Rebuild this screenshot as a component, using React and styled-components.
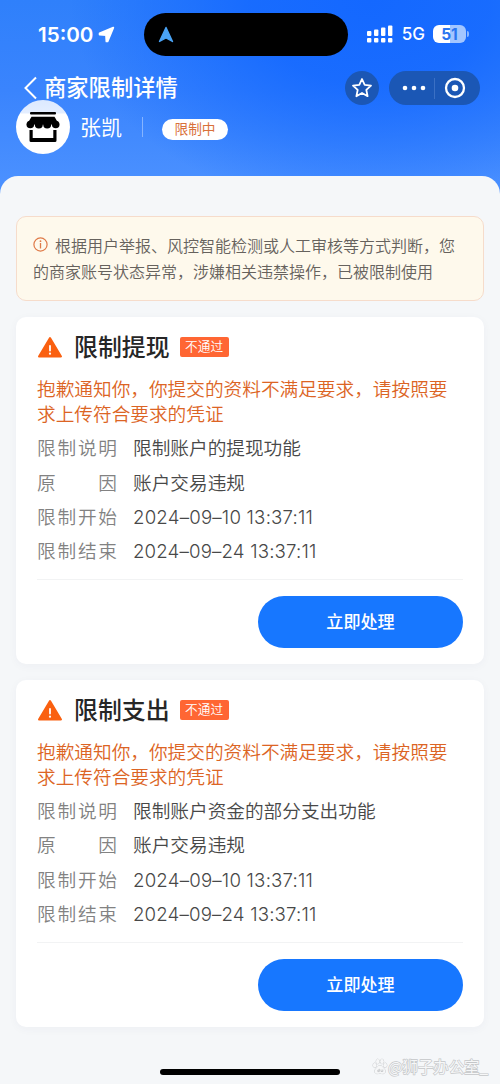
import React from 'react';
import styled, { createGlobalStyle } from 'styled-components';

const GlobalStyle = createGlobalStyle`
  * {
    box-sizing: border-box;
  }
  body {
    margin: 0;
    font-family: Inter, 'Noto Sans CJK SC', sans-serif;
    background: #f5f6f8;
  }
`;
const Screen = styled.div`
  position: relative;
  width: 500px;
  height: 1084px;
  overflow: hidden;
  background:
    radial-gradient(ellipse 300px 210px at 370px 0, #1468ff 0%, rgba(20, 104, 255, 0.85) 40%, rgba(20, 104, 255, 0) 100%),
    linear-gradient(180deg, #2f80fb 0, #3a84fd 90px, #4a90ff 180px);
`;
const StatusBar = styled.div`
  display: flex;
  align-items: center;
  height: 68px;
  padding: 0 31px 0 38px;
  color: #fff;
`;
const Time = styled.div`
  display: flex;
  align-items: center;
  gap: 5px;
  width: 106px;
  font-size: 20.6px;
  font-weight: 600;
`;
const Island = styled.div`
  display: flex;
  align-items: center;
  width: 204px;
  height: 43px;
  padding-left: 14px;
  border-radius: 22px;
  background: #000;
`;
const Signals = styled.div`
  display: flex;
  align-items: center;
  margin-left: auto;
`;
const Network = styled.div`
  margin: 0 8px 0 9px;
  font-size: 17px;
  font-weight: 500;
`;
const Battery = styled.div`
  display: flex;
  align-items: center;
  justify-content: center;
  width: 33px;
  height: 18px;
  border-radius: 6px;
  background: linear-gradient(90deg, #fff 51%, #a3c6ff 51%);
  color: #2a75f0;
  font-size: 15.5px;
  font-weight: 700;
`;
const BatteryTip = styled.div`
  width: 2px;
  height: 6px;
  margin-left: 1px;
  border-radius: 0 2px 2px 0;
  background: #8ab6ff;
`;
const NavBar = styled.div`
  display: flex;
  align-items: center;
  height: 40px;
  padding: 0 20px 0 23px;
  color: #fff;
`;
const PageTitle = styled.div`
  flex: 1;
  margin-left: 6px;
  font-size: 22.3px;
  font-weight: 500;
  line-height: 32px;
`;
const RoundButton = styled.div`
  display: flex;
  align-items: center;
  justify-content: center;
  width: 34px;
  height: 34px;
  margin-right: 10px;
  border-radius: 50%;
  background: #1b57b5;
`;
const Capsule = styled.div`
  display: flex;
  align-items: center;
  width: 91px;
  height: 34px;
  border-radius: 17px;
  background: #1b57b5;
`;
const CapsuleHalf = styled.div`
  display: flex;
  align-items: center;
  width: ${props => props.$width}px;
  height: 21px;
  padding-left: ${props => props.$inset}px;

  & + & {
    border-left: 1px solid #3b70c4;
  }
`;
const Profile = styled.div`
  display: flex;
  align-items: center;
  height: 54px;
  margin-top: -8px;
  padding-left: 16px;
  color: #fff;
`;
const Avatar = styled.div`
  display: flex;
  align-items: center;
  justify-content: center;
  width: 54px;
  height: 54px;
  border-radius: 50%;
  background: linear-gradient(180deg, #dce9ff 0, #e4eeff 13px, #fff 14px);
`;
const Name = styled.div`
  margin-left: 10px;
  padding-bottom: 2px;
  font-size: 21px;
`;
const Separator = styled.div`
  width: 1px;
  height: 20px;
  margin: 0 19px 0 20px;
  background: #86b4ff;
`;
const StatusPill = styled.div`
  width: 66px;
  height: 21px;
  margin-top: 4px;
  border-radius: 11px;
  background: #fff;
  color: #d9713a;
  font-size: 13.7px;
  line-height: 21px;
  text-align: center;
`;
const Panel = styled.div`
  height: 908px;
  margin-top: 22px;
  padding: 40px 16px 0;
  border-radius: 18px 18px 0 0;
  background: #f5f7f9;
`;
const Notice = styled.div`
  height: 85px;
  padding: 16px 0 0 16px;
  border: 1px solid #f6dccb;
  border-radius: 10px;
  background: #fef9ec;
  color: #66625d;
  font-size: 16px;
  font-weight: 350;
  line-height: 26px;
  white-space: nowrap;
`;
const InfoIcon = styled.svg`
  margin-right: 7px;
  vertical-align: 0;
`;
const Card = styled.div`
  height: 346.5px;
  margin-top: 16.3px;
  padding: 11px 21px 0;
  border-radius: 10px;
  background: #fff;
  box-shadow: 0 2px 10px rgba(40, 60, 90, 0.04);
`;
const CardHeader = styled.div`
  display: flex;
  align-items: center;
  height: 36px;
`;
const CardTitle = styled.div`
  margin: 0 10px 0 11px;
  padding-bottom: 1px;
  color: #262626;
  font-size: 23.9px;
  font-weight: 500;
`;
const Badge = styled.div`
  width: 49px;
  height: 20px;
  margin-top: 2px;
  border-radius: 2px;
  background: #ff6633;
  color: #fff;
  font-size: 12.7px;
  font-weight: 350;
  line-height: 19px;
  text-align: center;
`;
const Warning = styled.div`
  margin-top: 14px;
  color: #dc6424;
  font-size: 18.67px;
  font-weight: 350;
  line-height: 24.4px;
  white-space: nowrap;
`;
const Rows = styled.div`
  margin-top: 5px;
`;
const Row = styled.div`
  display: flex;
  height: 34.4px;
  font-size: 18.67px;
  font-weight: 350;
  line-height: 34.4px;
`;
const Label = styled.div`
  display: flex;
  justify-content: space-between;
  width: 80px;
  margin-right: 16px;
  color: #828282;
`;
const Value = styled.div`
  color: #484848;
  letter-spacing: ${props => props.$tracking || 0}px;
  white-space: nowrap;
`;
const Footer = styled.div`
  display: flex;
  justify-content: flex-end;
  margin-top: 9.6px;
  padding-top: 16px;
  border-top: 1px solid #f2f3f4;
`;
const Button = styled.button`
  width: 205px;
  height: 52px;
  padding: 0 0 3px;
  border: 0;
  border-radius: 26px;
  background: #1777ff;
  color: #fff;
  font-family: inherit;
  font-size: 17.1px;
  font-weight: 500;
`;
const HomeBar = styled.div`
  position: absolute;
  left: 160px;
  bottom: 9px;
  width: 180px;
  height: 6px;
  border-radius: 3px;
  background: #000;
`;
const Watermark = styled.div`
  position: absolute;
  left: 372px;
  bottom: 8px;
  display: flex;
  align-items: center;
  color: #f6f7f8;
  font-family: 'Noto Sans CJK SC', sans-serif;
  font-size: 15.4px;
  line-height: 20px;
  paint-order: stroke fill;
  -webkit-text-stroke: 1.3px #c4c6c8;
`;

const restrictions = [
  {
    title: '限制提现',
    rows: [
      { label: '限制说明', value: '限制账户的提现功能' },
      { label: '原因', value: '账户交易违规' },
      { label: '限制开始', value: '2024–09–10 13:37:11', tracking: 0.2 },
      { label: '限制结束', value: '2024–09–24 13:37:11', tracking: 0.16 }
    ]
  },
  {
    title: '限制支出',
    rows: [
      { label: '限制说明', value: '限制账户资金的部分支出功能' },
      { label: '原因', value: '账户交易违规' },
      { label: '限制开始', value: '2024–09–10 13:37:11', tracking: 0.2 },
      { label: '限制结束', value: '2024–09–24 13:37:11', tracking: 0.16 }
    ]
  }
];

const SignalIcon = () => (
  <svg width="26" height="18" viewBox="0 0 26 18" fill="#fff">
    <rect x="0" y="6" width="4.4" height="5" rx="1" />
    <rect x="7" y="4.5" width="4.4" height="6.5" rx="1" />
    <rect x="14" y="2.5" width="4.4" height="8.5" rx="1" />
    <rect x="21" y="0.5" width="4.4" height="10.5" rx="1" />
    <rect x="0" y="13" width="4.4" height="4.4" rx="1" />
    <rect x="7" y="13" width="4.4" height="4.4" rx="1" />
    <rect x="14" y="13" width="4.4" height="4.4" rx="1" />
    <rect x="21" y="13" width="4.4" height="4.4" rx="1" />
  </svg>
);

const ShopIcon = () => (
  <svg width="34" height="32" viewBox="0 0 34 32">
    <rect x="4" y="1" width="26" height="2.600" rx="1" />
    <path d="M5.500 5.800h23l4.500 7.700H1z" />
    <circle cx="4.300" cy="13.500" r="3.800" />
    <circle cx="12.800" cy="13.500" r="4" />
    <circle cx="21.200" cy="13.500" r="4" />
    <circle cx="29.700" cy="13.500" r="3.800" />
    <path d="M3.500 19h3.200v8h20.600v-8h3.200v10.500q0 1.500-1.500 1.500H5q-1.500 0-1.500-1.500z" />
  </svg>
);

const AlertIcon = () => (
  <svg width="26" height="24" viewBox="0 0 26 24">
    <path d="M13 4 24 22.500H2z" fill="#fa6010" stroke="#fa6010" strokeWidth="2" strokeLinejoin="round" />
    <path d="M13 12v4.500" stroke="#fff" strokeWidth="1.800" strokeLinecap="round" />
    <circle cx="13" cy="19.700" r="1.100" fill="#fff" />
  </svg>
);

const PawIcon = () => (
  <svg width="16" height="17" viewBox="0 0 16 17" fill="#f6f7f8" stroke="#c4c6c8" strokeWidth="0.900">
    <ellipse cx="2.700" cy="7.300" rx="1.700" ry="2.300" />
    <ellipse cx="5.800" cy="3.500" rx="1.700" ry="2.400" />
    <ellipse cx="10" cy="3.500" rx="1.700" ry="2.400" />
    <ellipse cx="13.200" cy="7.300" rx="1.700" ry="2.300" />
    <path d="M8 7.500c2 0 2.600 2 4 3.200 2 1.600 1.500 5-1 5-1.200 0-1.800-.3-3-.3s-1.800.3-3 .3c-2.500 0-3-3.400-1-5C5.400 9.500 6 7.500 8 7.500z" />
    <path d="M7.300 10.800v2.800H5.800v-1.500h1.500M9 11.500v2h1.800v-2" fill="none" />
  </svg>
);

const RestrictionCard = ({ title, rows }) => (
  <Card>
    <CardHeader>
      <AlertIcon />
      <CardTitle>{title}</CardTitle>
      <Badge>不通过</Badge>
    </CardHeader>
    <Warning>
      抱歉通知你，你提交的资料不满足要求，请按照要<br />
      求上传符合要求的凭证
    </Warning>
    <Rows>
      {rows.map(row => (
        <Row key={row.label}>
          <Label>
            {row.label.split('').map((char, i) => <span key={i}>{char}</span>)}
          </Label>
          <Value $tracking={row.tracking}>{row.value}</Value>
        </Row>
      ))}
    </Rows>
    <Footer>
      <Button>立即处理</Button>
    </Footer>
  </Card>
);

const App = () => (
  <Screen>
    <GlobalStyle />
    <StatusBar>
      <Time>
        15:00
        <svg width="17" height="17" viewBox="0 0 17 17">
          <path d="M15.300 1.600 1.600 7.400V8.600L8 9 8.400 15.400H9.600z" fill="#fff" stroke="#fff" strokeWidth="1.800" strokeLinejoin="round" />
        </svg>
      </Time>
      <Island>
        <svg width="16" height="17" viewBox="0 0 16 17">
          <path d="M8 1.500 14.500 15.500 8 12 1.500 15.500z" fill="#4aa3f5" stroke="#4aa3f5" strokeWidth="1.400" strokeLinejoin="round" />
        </svg>
      </Island>
      <Signals>
        <SignalIcon />
        <Network>5G</Network>
        <Battery>51</Battery>
        <BatteryTip />
      </Signals>
    </StatusBar>
    <NavBar>
      <svg width="15" height="24" viewBox="0 0 15 24">
        <path d="M13 1.500 2.500 12 13 22.500" fill="none" stroke="#fff" strokeWidth="2" />
      </svg>
      <PageTitle>商家限制详情</PageTitle>
      <RoundButton>
        <svg width="22" height="22" viewBox="0 0 22 22">
          <path d="m11 2 2.700 5.900 6.300.7-4.700 4.300 1.300 6.300-5.600-3.200-5.600 3.200 1.300-6.300L2 8.600l6.300-.7z" fill="none" stroke="#fff" strokeWidth="1.800" strokeLinejoin="round" />
        </svg>
      </RoundButton>
      <Capsule>
        <CapsuleHalf $width={45} $inset={13}>
          <svg width="24" height="6" viewBox="0 0 24 6" fill="#fff">
            <circle cx="3" cy="3" r="2.300" />
            <circle cx="12" cy="3" r="2.300" />
            <circle cx="21" cy="3" r="2.300" />
          </svg>
        </CapsuleHalf>
        <CapsuleHalf $width={46} $inset={9}>
          <svg width="22" height="22" viewBox="0 0 22 22">
            <circle cx="11" cy="11" r="9" fill="none" stroke="#fff" strokeWidth="2.300" />
            <circle cx="11" cy="11" r="3.300" fill="#fff" />
          </svg>
        </CapsuleHalf>
      </Capsule>
    </NavBar>
    <Profile>
      <Avatar><ShopIcon /></Avatar>
      <Name>张凯</Name>
      <Separator />
      <StatusPill>限制中</StatusPill>
    </Profile>
    <Panel>
      <Notice>
        <InfoIcon width="15" height="15" viewBox="0 0 15 15">
          <circle cx="7.500" cy="7.500" r="6.600" fill="none" stroke="#df7a48" strokeWidth="1.200" />
          <path d="M7.500 6v5.500" stroke="#df7a48" strokeWidth="1.300" />
          <circle cx="7.500" cy="4.200" r="0.900" fill="#df7a48" />
        </InfoIcon>
        根据用户举报、风控智能检测或人工审核等方式判断，您<br />
        的商家账号状态异常，涉嫌相关违禁操作，已被限制使用
      </Notice>
      {restrictions.map(item => <RestrictionCard key={item.title} {...item} />)}
    </Panel>
    <HomeBar />
    <Watermark>
      <PawIcon />
      @狮子办公室_
    </Watermark>
  </Screen>
);

export default App;
